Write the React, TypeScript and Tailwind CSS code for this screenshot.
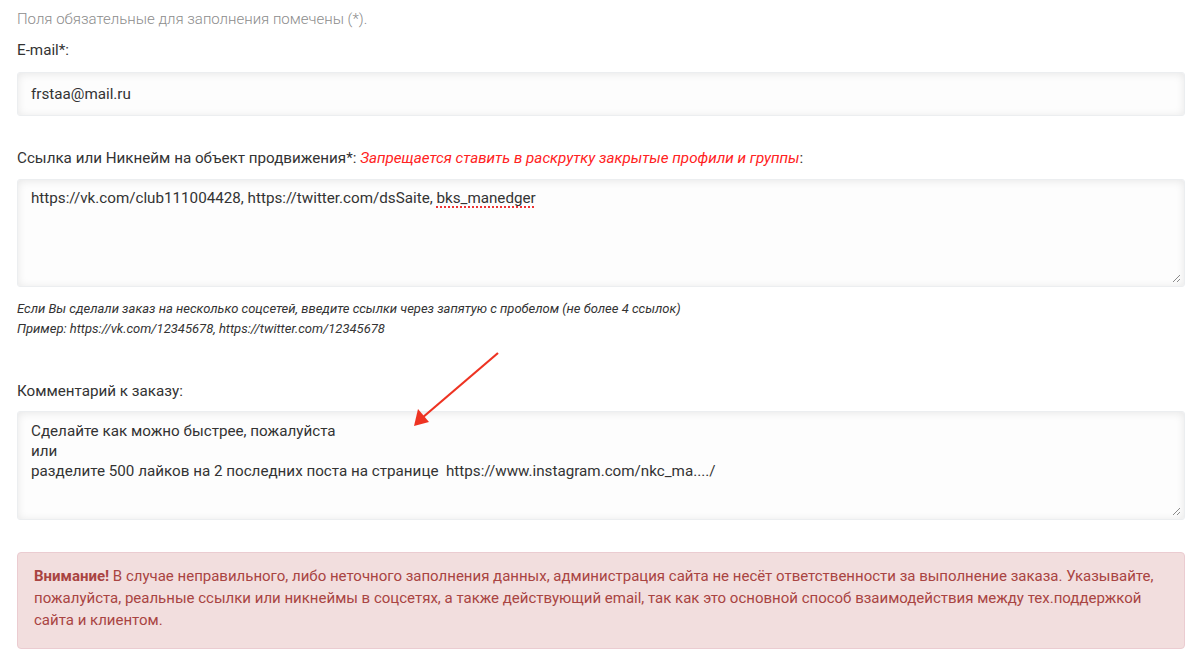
import React from "react";

function Grip() {
  return (
    <svg
      className="absolute right-[3px] bottom-[3px]"
      width="10"
      height="10"
      viewBox="0 0 10 10"
      aria-hidden
    >
      <path d="M9 2 L2 9 M9 6 L6 9" stroke="#8a8a8a" strokeWidth="1" />
    </svg>
  );
}

const field =
  "relative w-full rounded-[3px] border border-[#eceef0] bg-[#fdfdfd] shadow-[inset_0_1px_9px_rgba(0,0,0,0.09)] px-[13px] text-[15.2px] text-[#333]";

export default function App() {
  return (
    <div className="w-[1200px] h-[657px] bg-white overflow-hidden font-['Roboto',sans-serif] text-[#333]">
      <div className="px-[17px] pt-[9px] pr-[15px] flex flex-col">
        <p className="text-[15px] font-light text-[#8c8c8c] leading-[20px]">
          Поля обязательные для заполнения помечены (*).
        </p>

        <label className="mt-[11px] text-[15.2px] leading-[20px]">E-mail*:</label>
        <div className={field + " mt-[12px] h-[44px] flex items-center"}>
          frstaa@mail.ru
        </div>

        <label className="mt-[32px] text-[15.2px] leading-[20px]">
          Ссылка или Никнейм на объект продвижения*:{" "}
          <span className="italic text-[#ff2222]">
            Запрещается ставить в раскрутку закрытые профили и группы
          </span>
          :
        </label>
        <div className={field + " mt-[11px] h-[108px] pt-[8px] leading-[20px]"}>
          https://vk.com/club111004428, https://twitter.com/dsSaite,{" "}
          <span className="underline decoration-dotted decoration-[#e33] decoration-2 underline-offset-[3px]">
            bks_manedger
          </span>
          <Grip />
        </div>

        <div className="mt-[12px] text-[13px] italic leading-[20px] text-[#333]">
          <p>
            Если Вы сделали заказ на несколько соцсетей, введите ссылки через
            запятую с пробелом (не более 4 ссылок)
          </p>
          <p>Пример: https://vk.com/12345678, https://twitter.com/12345678</p>
        </div>

        {/* red pointer arrow drawn over the comment box */}
        <div className="relative z-10">
          <svg
            className="absolute left-[378px] top-[12px]"
            width="110"
            height="90"
            viewBox="0 0 110 90"
            aria-hidden
          >
            <line x1="103" y1="2" x2="27" y2="67" stroke="#ee3322" strokeWidth="2.2" />
            <path d="M19 75 L23 58 L34 71 Z" fill="#ee3322" />
          </svg>
        </div>

        <label className="mt-[42px] text-[15.2px] leading-[20px]">
          Комментарий к заказу:
        </label>
        <div className={field + " mt-[10px] h-[109px] pt-[9px] leading-[20px]"}>
          <p>Сделайте как можно быстрее, пожалуйста</p>
          <p>или</p>
          <p>
            разделите 500 лайков на 2 последних поста на странице{" "}
            {"\u00a0"}https://www.instagram.com/nkc_ma..../
          </p>
          <Grip />
        </div>

        <div className="mt-[32px] h-[97px] rounded-[4px] border border-[#ebccd1] bg-[#f2dede] px-[16px] pt-[12px] text-[15px] leading-[22px] text-[#a94442]">
          <p>
            <b className="font-bold">Внимание!</b> В случае неправильного, либо
            неточного заполнения данных, администрация сайта не несёт
            ответственности за выполнение заказа. Указывайте, пожалуйста,
            реальные ссылки или никнеймы в соцсетях, а также действующий email,
            так как это основной способ взаимодействия между тех.поддержкой
            сайта и клиентом.
          </p>
        </div>
      </div>
    </div>
  );
}
